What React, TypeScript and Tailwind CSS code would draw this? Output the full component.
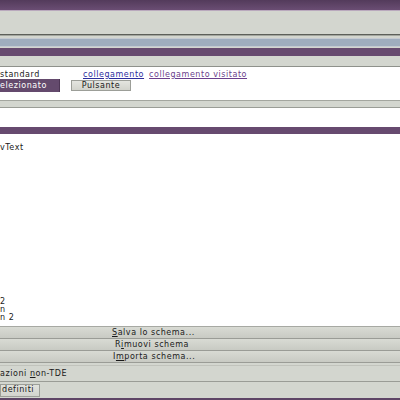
import React from "react";

const U = ({ children }: { children: React.ReactNode }) => (
  <span className="underline underline-offset-1">{children}</span>
);

export default function App() {
  return (
    <div
      className="w-[400px] h-[400px] overflow-hidden bg-white flex flex-col text-[8px] leading-none tracking-[0.55px] text-[#1a1a1a]"
      style={{ fontFamily: '"DejaVu Sans", sans-serif' }}
    >
      {/* top purple */}
      <div className="h-[10px] shrink-0 bg-gradient-to-b from-[#533b5b] to-[#6a4d73]" />
      <div className="h-px shrink-0 bg-[#b9a9bd]" />
      <div className="h-[23px] shrink-0 bg-[#d3d6cf]" />
      <div className="h-px shrink-0 bg-[#5d605a]" />
      <div className="h-px shrink-0 bg-[#a3a69f]" />
      <div className="h-[2px] shrink-0 bg-[#d3d6cf]" />
      <div className="h-px shrink-0 bg-[#c4cad2]" />
      <div className="h-[7px] shrink-0 bg-[#9fadbe]" />
      <div className="h-px shrink-0 bg-[#c4cad2]" />
      <div className="h-px shrink-0 bg-[#d3d6cf]" />
      <div className="h-[8px] shrink-0 bg-[#674a6f]" />
      <div className="h-[10px] shrink-0 bg-[#d3d6cf]" />
      <div className="h-px shrink-0 bg-[#8e918b]" />

      {/* widgets area */}
      <div className="h-[33px] shrink-0 bg-white flex flex-col">
        <div className="h-[9px] mt-[3px] flex items-center">
          <span className="w-[83px]">standard</span>
          <span className="text-[#2d2d9e] underline underline-offset-1">collegamento</span>
          <span className="ml-[5px] text-[#6b3f8c] underline underline-offset-1">collegamento visitato</span>
        </div>
        <div className="flex items-center">
          <div className="w-[60px] h-[13px] bg-[#644a6d] text-white flex items-center border-r border-[#4d3655]">
            <span>elezionato</span>
          </div>
          <div className="ml-[11px] w-[60px] h-[11px] bg-gradient-to-b from-[#e4e5e0] to-[#d2d3cc] border border-[#9c9e98] flex items-center justify-center">
            Pulsante
          </div>
        </div>
      </div>

      <div className="h-px shrink-0 bg-[#a3a69f]" />
      <div className="h-[6px] shrink-0 bg-[#d3d6cf]" />
      <div className="h-px shrink-0 bg-[#9a9d96]" />
      <div className="h-[19px] shrink-0 bg-white" />
      <div className="h-[7px] shrink-0 bg-[#674a6f]" />

      {/* text view */}
      <div className="h-[192px] shrink-0 bg-white relative overflow-hidden">
        <div className="absolute left-0 top-[10px]">vText</div>
        <div className="absolute left-0 top-[164px] flex flex-col">
          <span className="h-[8px]">2</span>
          <span className="h-[8px]">n</span>
          <span className="h-[8px]">n 2</span>
        </div>
      </div>

      {/* schema buttons */}
      <div className="h-px shrink-0 bg-[#a7a9a3]" />
      <div className="h-[12px] shrink-0 bg-gradient-to-b from-[#d9dbd4] to-[#c8cac3] border-b border-[#9a9c96] flex items-center">
        <span className="pl-[112px]">
          <U>S</U>alva lo schema...
        </span>
      </div>
      <div className="h-[12px] shrink-0 bg-gradient-to-b from-[#d9dbd4] to-[#c8cac3] border-b border-[#9a9c96] flex items-center">
        <span className="pl-[115px]">
          R<U>i</U>muovi schema
        </span>
      </div>
      <div className="h-[12px] shrink-0 bg-gradient-to-b from-[#d9dbd4] to-[#c8cac3] border-b border-[#9a9c96] flex items-center">
        <span className="pl-[113px]">
          I<U>m</U>porta schema...
        </span>
      </div>
      <div className="h-[2px] shrink-0 bg-[#d3d6cf]" />
      <div className="h-px shrink-0 bg-[#c1c3bc]" />
      <div className="h-[15px] shrink-0 bg-[#d3d6cf] flex items-center">
        <span>
          azioni <U>n</U>on-TDE
        </span>
      </div>
      <div className="h-px shrink-0 bg-[#9a9c96]" />
      <div className="h-[16px] shrink-0 bg-[#d3d6cf] flex items-center">
        <div className="w-[40px] h-[13px] bg-gradient-to-b from-[#e1e2dd] to-[#d3d4ce] border border-[#9c9e98] flex items-center pl-px">
          definiti
        </div>
      </div>
      <div className="flex-1 bg-[#5e4566]" />
    </div>
  );
}
